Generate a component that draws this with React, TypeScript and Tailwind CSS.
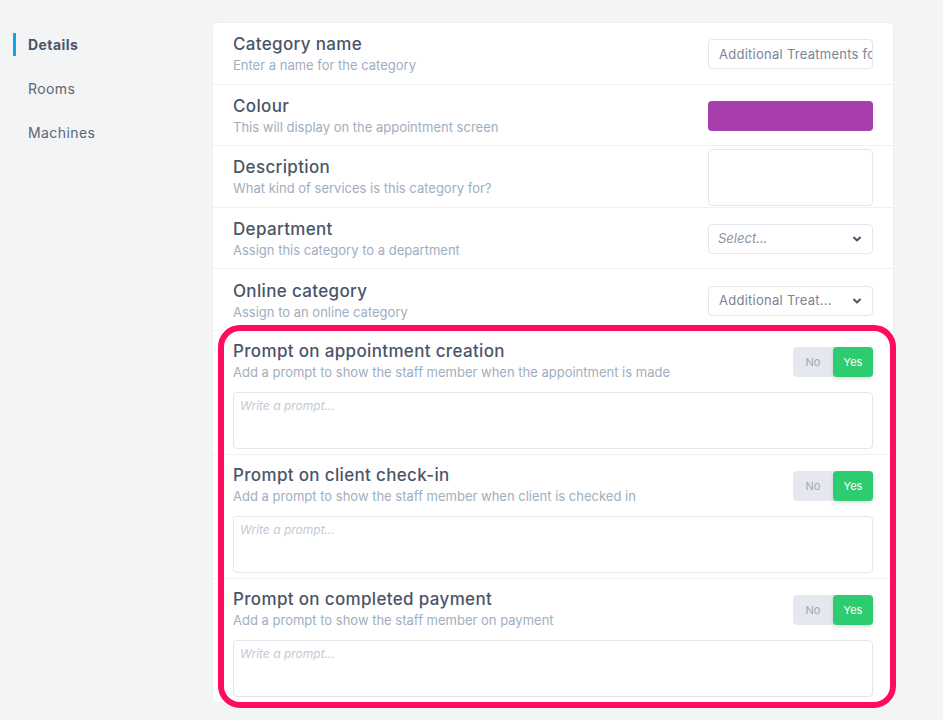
import React from 'react'

const font = { fontFamily: 'Inter, "Noto Sans", sans-serif' }

function Chevron() {
  return (
    <svg width="10" height="10" viewBox="0 0 10 10" className="text-[#4a5568]">
      <path d="M2 3.5 L5 6.5 L8 3.5" fill="none" stroke="currentColor" strokeWidth="2" strokeLinecap="round" strokeLinejoin="round" />
    </svg>
  )
}

function Toggle() {
  return (
    <div className="mt-[7px] flex h-[30px] w-[80px] shrink-0 rounded bg-[#e5e8ee] text-[11px]">
      <div className="flex flex-1 items-center justify-center text-[#a0a8b8]">No</div>
      <div className="flex flex-1 items-center justify-center rounded bg-[#2ecc71] text-white shadow-[0_2px_4px_rgba(0,0,0,0.12)]">Yes</div>
    </div>
  )
}

function Label({ title, sub }: { title: string; sub: string }) {
  return (
    <div className="flex flex-col">
      <div className="text-[17px] leading-[22px] font-medium tracking-[0.02em] text-[#4a5568]">{title}</div>
      <div className="text-[13px] leading-[20px] text-[#a0aec0]">{sub}</div>
    </div>
  )
}

function Row({ title, sub, children }: { title: string; sub: string; children: React.ReactNode }) {
  return (
    <div className="flex h-[61.6px] items-center justify-between border-b border-[#edf0f4] px-5 pt-[2px]">
      <Label title={title} sub={sub} />
      {children}
    </div>
  )
}

function PromptRow({ title, sub, last }: { title: string; sub: string; last?: boolean }) {
  return (
    <div className={'flex flex-col px-5 pt-[9px] pb-[5px] ' + (last ? '' : 'border-b border-[#edf0f4]')}>
      <div className="flex items-start justify-between">
        <Label title={title} sub={sub} />
        <Toggle />
      </div>
      <div className="mt-[10px] h-[57px] rounded border border-[#e2e6ed] px-[6px] py-[4px] text-[12px] italic text-[#c3c9d4]">
        Write a prompt...
      </div>
    </div>
  )
}

export default function App() {
  return (
    <div className="relative flex min-h-[720px] w-full bg-[#f3f4f6]" style={font}>
      <div className="flex w-[213px] shrink-0 flex-col pt-[33px]">
        <div className="ml-[13px] flex h-[23px] items-center border-l-[3px] border-[#0ea5e9] pl-[12px] text-[14px] font-bold tracking-[0.03em] text-[#4a5568]">
          Details
        </div>
        <div className="mt-[21px] flex h-[23px] items-center pl-[28px] text-[14px] tracking-[0.03em] text-[#5a6577]">Rooms</div>
        <div className="mt-[21px] flex h-[23px] items-center pl-[28px] text-[14px] tracking-[0.03em] text-[#5a6577]">Machines</div>
      </div>

      <div className="mt-[23px] mb-[19px] w-[680px] self-start rounded bg-white shadow-[0_0_2px_rgba(0,0,0,0.06)]">
        <Row title="Category name" sub="Enter a name for the category">
          <div className="flex h-[30px] w-[165px] items-center overflow-hidden whitespace-nowrap rounded border border-[#e2e6ed] px-[10px] text-[13px] tracking-[0.02em] text-[#7a8496]">
            Additional Treatments for
          </div>
        </Row>
        <Row title="Colour" sub="This will display on the appointment screen">
          <div className="h-[30px] w-[165px] rounded bg-[#a83dad]" />
        </Row>
        <Row title="Description" sub="What kind of services is this category for?">
          <div className="h-[57px] w-[165px] rounded border border-[#e2e6ed]" />
        </Row>
        <Row title="Department" sub="Assign this category to a department">
          <div className="flex h-[30px] w-[165px] items-center justify-between rounded border border-[#e2e6ed] pl-[9px] pr-[10px] text-[13px] italic text-[#8a93a3]">
            <span>Select...</span>
            <Chevron />
          </div>
        </Row>
        <Row title="Online category" sub="Assign to an online category">
          <div className="flex h-[30px] w-[165px] items-center justify-between rounded border border-[#e2e6ed] pl-[10px] pr-[10px] text-[13px] tracking-[0.02em] text-[#7a8496]">
            <span>Additional Treat...</span>
            <Chevron />
          </div>
        </Row>
        <PromptRow title="Prompt on appointment creation" sub="Add a prompt to show the staff member when the appointment is made" />
        <PromptRow title="Prompt on client check-in" sub="Add a prompt to show the staff member when client is checked in" />
        <PromptRow title="Prompt on completed payment" sub="Add a prompt to show the staff member on payment" last />
      </div>

      <div className="pointer-events-none absolute left-[218px] top-[325px] h-[383px] w-[678px] rounded-[22px] border-[6px] border-[#ff0d5c]" />
    </div>
  )
}
